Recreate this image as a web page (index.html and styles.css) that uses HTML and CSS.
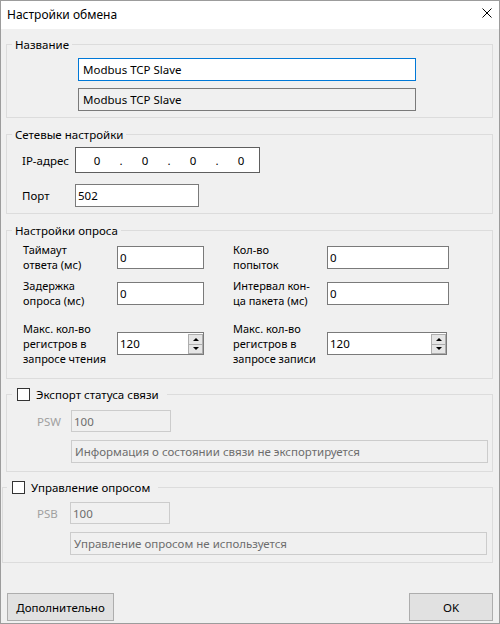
FILE: index.html
```html
<!DOCTYPE html>
<html lang="ru">
<head>
    <meta charset="UTF-8">
    <meta name="viewport" content="width=device-width, initial-scale=1.0">
    <title>Настройки обмена</title>
    <link rel="stylesheet" href="styles.css">
</head>
<body>

<div class="window">
    <div class="titlebar">
        <span class="title">Настройки обмена</span>
        <svg class="close" width="10" height="10" viewBox="0 0 10 10">
            <path d="M0.5 0.5 L9.5 9.5 M9.5 0.5 L0.5 9.5" stroke="#000" stroke-width="1" fill="none"/>
        </svg>
    </div>

    <div class="client">

        <fieldset class="group g-name">
            <legend>Название</legend>
            <div class="name-body">
                <input class="edit focused" type="text" value="Modbus TCP Slave">
                <input class="edit readonly" type="text" value="Modbus TCP Slave" readonly>
            </div>
        </fieldset>

        <fieldset class="group g-net">
            <legend>Сетевые настройки</legend>
            <div class="net-body">
                <label class="lbl">IP-адрес</label>
                <div class="ip-box">
                    <span class="ip-seg">0</span><span class="ip-dot">.</span>
                    <span class="ip-seg">0</span><span class="ip-dot">.</span>
                    <span class="ip-seg">0</span><span class="ip-dot">.</span>
                    <span class="ip-seg">0</span>
                </div>
                <label class="lbl" for="port">Порт</label>
                <input class="edit port" id="port" type="text" value="502">
            </div>
        </fieldset>

        <fieldset class="group g-poll">
            <legend>Настройки опроса</legend>
            <div class="poll-body">
                <div class="poll-row">
                    <label class="lbl">Таймаут<br>ответа (мс)</label>
                    <input class="edit short" type="text" value="0">
                    <label class="lbl">Кол-во<br>попыток</label>
                    <input class="edit wide" type="text" value="0">
                </div>
                <div class="poll-row row-2">
                    <label class="lbl">Задержка<br>опроса (мс)</label>
                    <input class="edit short" type="text" value="0">
                    <label class="lbl">Интервал кон-<br>ца пакета (мс)</label>
                    <input class="edit wide" type="text" value="0">
                </div>
                <div class="poll-row row-3">
                    <label class="lbl">Макс. кол-во<br>регистров в<br>запросе чтения</label>
                    <div class="spin short">
                        <input type="text" value="120">
                        <span class="spin-btns"><span class="spin-up"></span><span class="spin-down"></span></span>
                    </div>
                    <label class="lbl">Макс. кол-во<br>регистров в<br>запросе записи</label>
                    <div class="spin spin-wide">
                        <input type="text" value="120">
                        <span class="spin-btns"><span class="spin-up"></span><span class="spin-down"></span></span>
                    </div>
                </div>
            </div>
        </fieldset>

        <fieldset class="group g-psw">
            <legend><span class="check-box"></span>Экспорт статуса связи</legend>
            <div class="off-body">
                <span class="lbl off">PSW</span>
                <input class="edit disabled small" type="text" value="100" disabled>
                <div class="info">Информация о состоянии связи не экспортируется</div>
            </div>
        </fieldset>

        <fieldset class="group g-psb">
            <legend><span class="check-box"></span>Управление опросом</legend>
            <div class="off-body">
                <span class="lbl off">PSB</span>
                <input class="edit disabled small" type="text" value="100" disabled>
                <div class="info">Управление опросом не используется</div>
            </div>
        </fieldset>

        <div class="buttons">
            <button class="btn btn-more">Дополнительно</button>
            <button class="btn btn-ok">OK</button>
        </div>

    </div>
</div>

</body>
</html>
```

FILE: styles.css
```css
body {
    margin: 0;
    font-family: "Noto Sans", "Open Sans", sans-serif;
    font-size: 11.5px;
    color: #000;
}

.window {
    width: 500px;
    height: 624px;
    box-sizing: border-box;
    border: 1px solid #9c9c9c;
    background: #f0f0f0;
    display: flex;
    flex-direction: column;
}

.titlebar {
    height: 28px;
    background: #fff;
    display: flex;
    align-items: center;
    padding-left: 6px;
}
.title {
    font-size: 12px;
    line-height: 16px;
}
.close {
    margin-left: auto;
    margin-right: 7px;
    align-self: flex-start;
    margin-top: 7px;
}

.client {
    flex: 1;
    display: flex;
    flex-direction: column;
    padding-top: 8px;
}

/* group boxes */
.group {
    margin: 0 6px 0 5px;
    padding: 0;
    border: 1px solid #dcdcdc;
    min-width: 0;
}
.group legend {
    margin-left: 5px;
    padding: 0 3px;
    line-height: 15px;
    display: flex;
    align-items: center;
}
.g-net { margin-top: 9px; }
.g-poll { margin-top: 9px; }
.g-psw { margin-top: 8px; }
.g-psb { margin-top: 8px; margin-left: 1px; }

.g-psw legend { padding: 0 8px 0 5px; }
.g-psb legend { margin-left: 4px; padding: 0 8px 0 5px; }

.check-box {
    width: 11px;
    height: 11px;
    border: 1px solid #333;
    background: #fff;
    margin-right: 6px;
}

/* edits */
.edit {
    box-sizing: border-box;
    height: 23px;
    margin: 0;
    padding: 0 3px;
    border: 1px solid #7a7a7a;
    background: #fff;
    font: inherit;
    color: #000;
    outline: none;
}
.edit.focused {
    border-color: #0078d7;
}
.edit.readonly {
    background: #f0f0f0;
}
.edit.disabled {
    height: 22px;
    background: #f0f0f0;
    border-color: #cccccc;
    color: #6d6d6d;
}

.lbl {
    line-height: 15px;
}
.lbl.off {
    color: #a0a0a0;
}

.name-body {
    display: flex;
    flex-direction: column;
    gap: 7px;
    padding: 6px 0 6px 71px;
}
.name-body .edit {
    width: 338px;
    padding-left: 4px;
}

.net-body {
    display: grid;
    grid-template-columns: 53px auto;
    justify-items: start;
    align-items: center;
    row-gap: 11px;
    padding: 5px 0 6px 15px;
}
.ip-box {
    box-sizing: border-box;
    width: 185px;
    height: 26px;
    border: 1px solid #5e5e5e;
    background: #fff;
    display: flex;
    align-items: center;
    padding-left: 4px;
}
.ip-seg {
    width: 34px;
    text-align: center;
}
.ip-dot {
    width: 14px;
    text-align: center;
}
.edit.port {
    width: 124px;
    padding-left: 2px;
}

.poll-body {
    padding: 4px 0 12px 16px;
}
.poll-body .lbl {
    font-size: 11px;
}
.poll-row {
    display: grid;
    grid-template-columns: 94px 116px 94px 122px;
    align-items: center;
}
.row-2 { margin-top: 6px; }
.row-3 { margin-top: 13px; }
.edit.short { width: 87px; padding-left: 2px; }
.edit.wide { width: 122px; padding-left: 2px; }

.spin {
    box-sizing: border-box;
    height: 23px;
    border: 1px solid #7a7a7a;
    background: #fff;
    display: flex;
    align-items: stretch;
}
.spin.short { width: 87px; }
.spin.spin-wide { width: 120px; }
.spin input {
    flex: 1;
    min-width: 0;
    border: none;
    padding: 0 2px;
    font: inherit;
    background: transparent;
    outline: none;
}
.spin-btns {
    width: 15px;
    display: flex;
    flex-direction: column;
    padding: 1px 0 0;
}
.spin-up, .spin-down {
    flex: 1;
    border: 1px solid #adadad;
    background: #e5e5e5;
    display: flex;
    align-items: center;
    justify-content: center;
}
.spin-down { border-top: none; }
.spin-up::after, .spin-down::after {
    content: "";
    border-left: 3px solid transparent;
    border-right: 3px solid transparent;
}
.spin-up::after { border-bottom: 3px solid #000; }
.spin-down::after { border-top: 3px solid #000; }

/* disabled export / control groups */
.off-body {
    display: grid;
    grid-template-columns: 34px 1fr;
    justify-items: start;
    align-items: center;
    row-gap: 8px;
    padding: 8px 4px 8px 30px;
}
.g-psb .off-body {
    grid-template-columns: 33px 1fr;
    padding: 7px 5px 7px 34px;
}
.edit.small {
    width: 100px;
    padding-left: 2px;
}
.info {
    grid-column: 2;
    justify-self: stretch;
    box-sizing: border-box;
    height: 23px;
    border: 1px solid #cccccc;
    color: #6d6d6d;
    padding-left: 3px;
    display: flex;
    align-items: center;
}

/* bottom buttons */
.buttons {
    display: flex;
    justify-content: space-between;
    margin-top: 30px;
    padding: 0 6px;
}
.btn {
    height: 28px;
    border: 1px solid #adadad;
    background: #e1e1e1;
    font: inherit;
    color: #000;
    padding: 0;
}
.btn-more { width: 107px; }
.btn-ok { width: 84px; }
```
